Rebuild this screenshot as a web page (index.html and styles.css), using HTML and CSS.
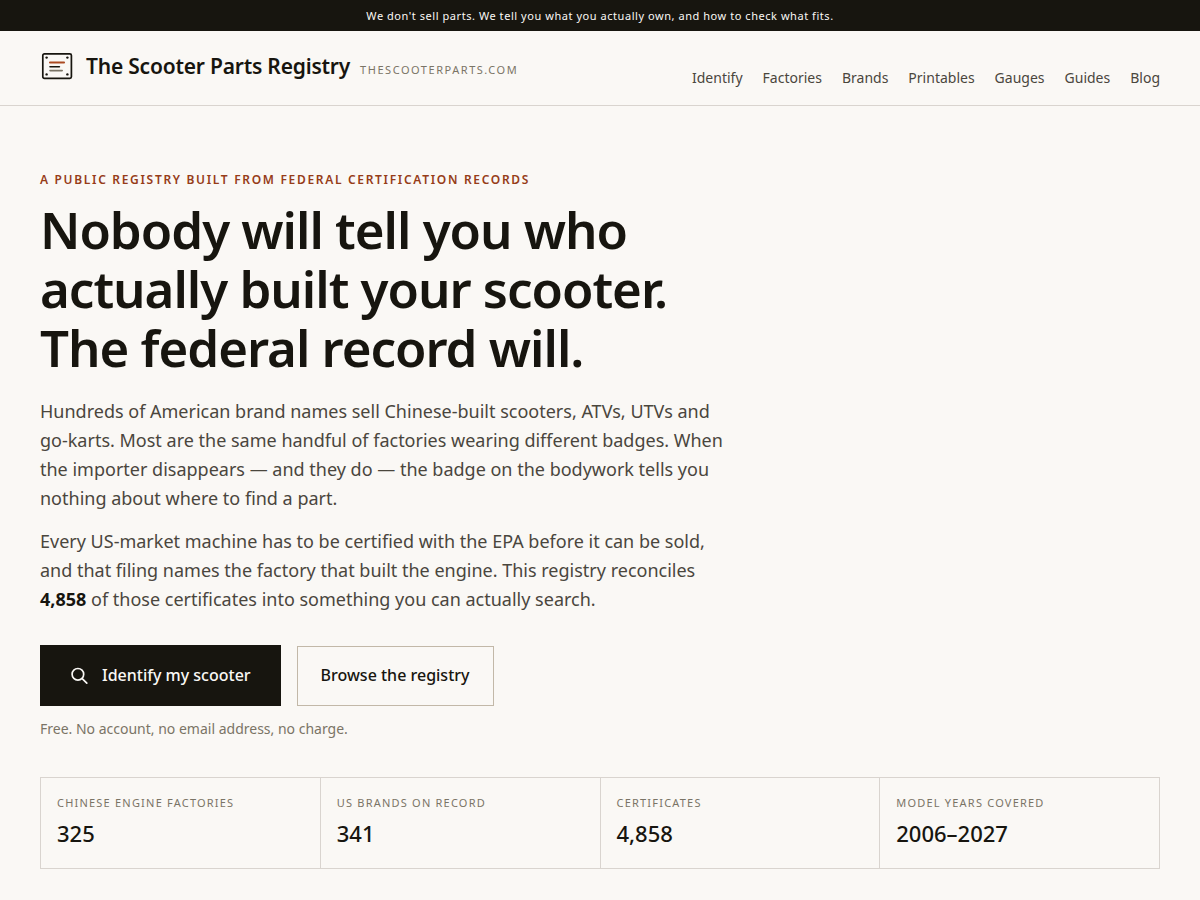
FILE: index.html
```
<!DOCTYPE html>
<html lang="en">
<head>
    <meta charset="utf-8">
    <meta name="viewport" content="width=device-width, initial-scale=1">
    <title>The Scooter Parts Registry</title>
    <link rel="stylesheet" href="styles.css">
</head>
<body>
    <p class="notice">We don't sell parts. We tell you what you actually own, and how to check what fits.</p>

    <header class="header">
        <div class="wrap header-inner">
            <a class="brand" href="#">
                <svg class="brand-mark" viewBox="0 0 34 34" fill="none" aria-hidden="true">
                    <rect x="2.8" y="4.8" width="28.6" height="24.6" rx="1.6" stroke="#17150f" stroke-width="1.7"/>
                    <g fill="#17150f">
                        <circle cx="6.6" cy="8.6" r="1.2"/>
                        <circle cx="27.4" cy="8.6" r="1.2"/>
                        <circle cx="6.6" cy="25.4" r="1.2"/>
                        <circle cx="27.4" cy="25.4" r="1.2"/>
                    </g>
                    <g stroke-linecap="round">
                        <path d="M10 13.5h14" stroke="#ab4a22" stroke-width="2.1"/>
                        <path d="M10 17.7h9.4" stroke="#17150f" stroke-width="1.6"/>
                        <path d="M10 21.6h12.2" stroke="#7a7466" stroke-width="1.6"/>
                    </g>
                </svg>
                <span class="brand-name">The Scooter Parts Registry</span>
                <span class="brand-domain">thescooterparts.com</span>
            </a>
            <nav class="nav">
                <a href="#">Identify</a>
                <a href="#">Factories</a>
                <a href="#">Brands</a>
                <a href="#">Printables</a>
                <a href="#">Gauges</a>
                <a href="#">Guides</a>
                <a href="#">Blog</a>
            </nav>
        </div>
    </header>

    <main class="wrap hero">
        <p class="eyebrow">A public registry built from federal certification records</p>
        <h1>Nobody will tell you who actually built your scooter. The federal record will.</h1>
        <p class="lede">Hundreds of American brand names sell Chinese-built scooters, ATVs, UTVs and go-karts. Most are the same handful of factories wearing different badges. When the importer disappears — and they do — the badge on the bodywork tells you nothing about where to find a part.</p>
        <p class="lede">Every US-market machine has to be certified with the EPA before it can be sold, and that filing names the factory that built the engine. This registry reconciles <strong>4,858</strong> of those certificates into something you can actually search.</p>

        <div class="actions">
            <a class="btn btn-primary" href="#">
                <svg class="btn-icon" viewBox="0 0 20 20" fill="none" stroke="currentColor" stroke-width="1.7" stroke-linecap="round" aria-hidden="true">
                    <circle cx="7.9" cy="9.3" r="5.8"/>
                    <path d="M12.2 13.6l4.6 4.6"/>
                </svg>
                Identify my scooter
            </a>
            <a class="btn btn-secondary" href="#">Browse the registry</a>
        </div>
        <p class="fine">Free. No account, no email address, no charge.</p>

        <dl class="stats">
            <div class="stat">
                <dt>Chinese engine factories</dt>
                <dd>325</dd>
            </div>
            <div class="stat">
                <dt>US brands on record</dt>
                <dd>341</dd>
            </div>
            <div class="stat">
                <dt>Certificates</dt>
                <dd>4,858</dd>
            </div>
            <div class="stat">
                <dt>Model years covered</dt>
                <dd>2006–2027</dd>
            </div>
        </dl>
    </main>
</body>
</html>
```
FILE: styles.css
```
* {
    box-sizing: border-box;
}

body {
    margin: 0;
    background: #faf8f5;
    color: #17150f;
    font: 16px/26px "Noto Sans", sans-serif;
}

p, h1, dl, dd {
    margin: 0;
}

a {
    color: inherit;
    text-decoration: none;
}

.wrap {
    max-width: 1200px;
    margin: 0 auto;
    padding: 0 40px;
}

.notice {
    padding: 7px 20px 6px;
    background: #17150f;
    color: #faf8f5;
    font-size: 11px;
    line-height: 18px;
    letter-spacing: 0.05em;
    text-align: center;
}

/* header */
.header {
    border-bottom: 1px solid #d9d4cf;
}

.header-inner {
    display: flex;
    justify-content: space-between;
    align-items: flex-end;
    padding-top: 16px;
    padding-bottom: 16px;
}

.brand {
    display: flex;
    align-items: baseline;
    gap: 10px;
    padding-bottom: 4px;
}

.brand-mark {
    align-self: center;
    width: 34px;
    height: 34px;
    margin-right: 2px;
}

.brand-name {
    font-size: 21px;
    line-height: 38px;
    font-weight: 600;
    letter-spacing: -0.01em;
}

.brand-domain {
    color: #7a7466;
    font-size: 11px;
    letter-spacing: 0.14em;
    text-transform: uppercase;
}

.nav {
    display: flex;
    gap: 20px;
    color: #4a463d;
    font-size: 14px;
    line-height: 22px;
}

/* hero */
.hero {
    padding-top: 64px;
    padding-bottom: 64px;
}

.eyebrow {
    color: #963c18;
    font-size: 12px;
    line-height: 20px;
    font-weight: 600;
    letter-spacing: 0.14em;
    text-transform: uppercase;
}

h1 {
    max-width: 690px;
    margin: 10px 0 20px;
    font-size: 51px;
    line-height: 59px;
    font-weight: 600;
    letter-spacing: -0.02em;
}

.lede {
    max-width: 690px;
    margin-bottom: 14px;
    color: #4a463d;
    font-size: 18px;
    line-height: 29px;
}

.lede strong {
    color: #17150f;
}

.actions {
    display: flex;
    align-items: flex-end;
    gap: 16px;
    margin-top: 31px;
}

.btn {
    display: inline-flex;
    align-items: center;
    font-size: 16px;
    line-height: 26px;
    font-weight: 500;
}

.btn-primary {
    gap: 12px;
    padding: 17px 30px 18px;
    background: #17150f;
    color: #faf8f5;
}

.btn-secondary {
    padding: 15px 23px 17px;
    border: 1px solid #c2b8a8;
}

.btn-icon {
    width: 20px;
    height: 20px;
}

.fine {
    margin-top: 12px;
    color: #7a7466;
    font-size: 14px;
    line-height: 22px;
}

/* registry totals */
.stats {
    display: grid;
    grid-template-columns: repeat(4, 1fr);
    gap: 1px;
    margin-top: 37px;
    border: 1px solid #d9d4cf;
    background: #d9d4cf;
}

.stat {
    padding: 16px 16px 18px;
    background: #faf8f5;
}

.stat dt {
    color: #7a7466;
    font-size: 11px;
    line-height: 18px;
    letter-spacing: 0.11em;
    text-transform: uppercase;
}

.stat dd {
    margin-top: 4px;
    font-size: 22px;
    line-height: 34px;
    font-weight: 500;
}
```
